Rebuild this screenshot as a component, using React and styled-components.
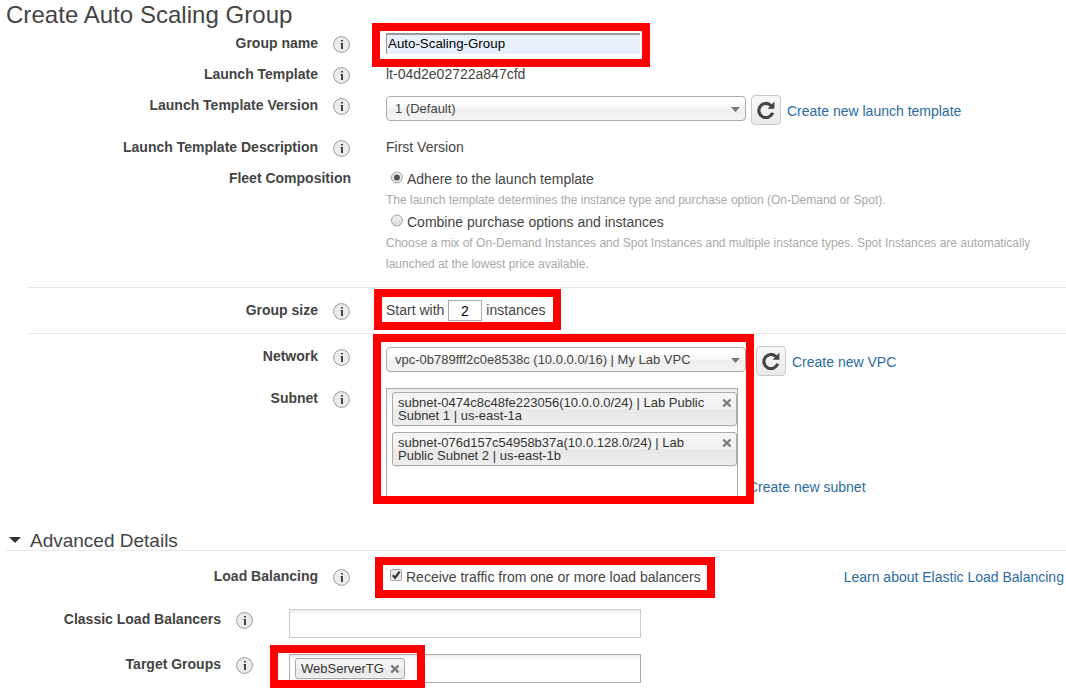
import React from "react";
import styled, { createGlobalStyle } from "styled-components";

const GlobalStyle = createGlobalStyle`
  * { box-sizing: border-box; }
  body {
    margin: 0;
    background: #fff;
    overflow: hidden;
    color: #444;
    font: 14px/20px "Liberation Sans", Arial, sans-serif;
  }
`;

const Page = styled.main`
  position: relative;
  width: 1066px;
  height: 690px;
  overflow: hidden;
`;

const Title = styled.h1`
  margin: 0;
  height: 33px;
  padding-left: 6px;
  font-size: 24px;
  font-weight: normal;
  line-height: 29px;
  letter-spacing: 0.04px;
`;

const Row = styled.div`
  display: flex;
  align-items: flex-start;
  height: ${(p) => p.$h}px;
  padding-top: ${(p) => p.$pad || 0}px;
`;

const Label = styled.div`
  flex: none;
  width: ${(p) => p.$w || 318}px;
  text-align: right;
  font-weight: bold;
`;

const InfoSlot = styled.div`
  flex: none;
  width: ${(p) => p.$w || 68}px;
  padding: 3px 0 0 15px;
  svg { display: block; }
`;

const Field = styled.div`
  display: flex;
  align-items: flex-start;
`;

const Divider = styled.div`
  height: 1px;
  margin-left: 27px;
  background: #eaeaea;
`;

const NameInput = styled.input`
  width: 254px;
  height: 21px;
  padding: 0 0 2px 1px;
  border: 0 solid #999;
  border-width: 2px 0 0 1px;
  background: #e8f0fe;
  color: #000;
  font: 13.333px/17px "Liberation Sans", Arial, sans-serif;
  outline: none;
`;

const Select = styled.div`
  display: flex;
  align-items: center;
  justify-content: space-between;
  width: 360px;
  height: 25px;
  margin-top: 1px;
  padding: 0 5px 0 8px;
  border: 1px solid #aaa;
  border-radius: 4px;
  background: linear-gradient(#fff 20%, #f6f6f6 50%, #eee 52%, #f4f4f4 100%);
  font-size: 13px;
  line-height: 23px;
  svg { margin-top: 2px; }
`;

const RefreshButton = styled.button`
  display: flex;
  align-items: center;
  justify-content: center;
  width: 30px;
  height: 30px;
  margin: 0 6px 0 ${(p) => p.$gap}px;
  padding: 0;
  border: 1px solid #c9c9c9;
  border-radius: 4px;
  background: linear-gradient(#f8f8f8, #e9e9e9);
`;

const Link = styled.a`
  color: #2a6ca2;
  margin-top: ${(p) => p.$top || 0}px;
  margin-left: ${(p) => p.$left || 0}px;
  white-space: nowrap;
`;

const Options = styled.div`
  width: 660px;
`;

const Option = styled.label`
  display: flex;
  height: 22px;
  padding: 1px 0 0 4px;
  svg { flex: none; display: block; margin: 2px 4px 0 0; }
`;

const Hint = styled.p`
  margin: 0;
  color: #a9a9a9;
  font-size: 12px;
  line-height: 21px;
`;

const CountInput = styled.input`
  width: 34px;
  height: 21px;
  margin: 0 4px;
  padding: 0 1px 0 0;
  border: 1px solid #aaa;
  color: #000;
  text-align: center;
  font: 14px "Liberation Sans", Arial, sans-serif;
  outline: none;
`;

const TokenBox = styled.div`
  display: flex;
  flex-direction: ${(p) => (p.$column ? "column" : "row")};
  align-items: flex-start;
  gap: 6px;
  width: 352px;
  height: ${(p) => p.$h}px;
  padding: 3px 0 0 5px;
  border: 1px solid ${(p) => p.$border || "#aaa"};
  background: linear-gradient(#eee 1%, #fff 15%);
  background-size: 100% ${(p) => (p.$column ? 110 : 28)}px;
  background-repeat: no-repeat;
`;

const Token = styled.div`
  display: flex;
  justify-content: space-between;
  width: ${(p) => p.$w}px;
  height: ${(p) => p.$h}px;
  padding: ${(p) => p.$pad}px 4px 0 5px;
  border: 1px solid #aaa;
  border-radius: 3px;
  background: linear-gradient(#f4f4f4 20%, #f0f0f0 50%, #e8e8e8 52%, #eee 100%);
  box-shadow: 0 1px 0 rgba(0, 0, 0, 0.05);
  color: #333;
  font-size: 13px;
  line-height: 13px;
  white-space: nowrap;
  svg { flex: none; margin-top: 2px; }
`;

const SectionHeading = styled.h2`
  display: flex;
  align-items: center;
  gap: 9px;
  height: 21px;
  margin: 0 0 0 6px;
  padding-left: 3px;
  border-bottom: 1px solid #eaeaea;
  font-size: 19px;
  font-weight: normal;
  line-height: 20px;
  span { padding-top: 2px; }
`;

const Highlight = styled.div`
  position: absolute;
  left: ${(p) => p.$x}px;
  top: ${(p) => p.$y}px;
  width: ${(p) => p.$w}px;
  height: ${(p) => p.$h}px;
  border: 8px solid #fe0000;
  pointer-events: none;
`;

const Info = ({ w }) => (
  <InfoSlot $w={w}>
    <svg width="17" height="17" viewBox="0 0 17 17">
      <circle cx="8.5" cy="8.5" r="7.9" fill="#ececec" stroke="#999" />
      <path d="M8 4h2v1.6H8zM8 7h2v6H8z" fill="#444" />
      <path d="M7 7h1v1H7z" fill="#999" />
    </svg>
  </InfoSlot>
);

const Arrow = () => (
  <svg width="9" height="5" viewBox="0 0 9 5">
    <path d="M0 0h9L4.5 5z" fill="#777" />
  </svg>
);

const Refresh = () => (
  <svg width="18" height="18" viewBox="0 0 18 18">
    <path d="M14 4.5A7.1 7.1 0 1 0 15.7 11.8" fill="none" stroke="#444" strokeWidth="3.1" />
    <path d="M17.4 .6V7.8H10.6z" fill="#444" />
  </svg>
);

const Close = () => (
  <svg width="10" height="10" viewBox="0 0 10 10">
    <path d="M1.3 1.5l7.2 7M8.5 1.5L1.3 8.5" stroke="#777" strokeWidth="2.3" />
  </svg>
);

const Radio = ({ on }) => (
  <svg width="13" height="13" viewBox="0 0 13 13">
    <defs>
      <linearGradient id="radioFill" x2="0" y2="1">
        <stop stopColor="#f0f0f0" />
        <stop offset="1" stopColor="#dcdcdc" />
      </linearGradient>
    </defs>
    <circle cx="6.9" cy="6.5" r="5.5" fill="url(#radioFill)" stroke="#a2a2a2" />
    {on && <circle cx="6.9" cy="6.5" r="3" fill="#555" />}
  </svg>
);

const Check = () => (
  <svg width="13" height="13" viewBox="0 0 13 13">
    <rect x="1.5" y=".5" width="11" height="11" rx="1.2" fill="#e8e8e8" stroke="#a4a4a4" />
    <path d="M3.8 6.3l2.3 2.4 4.5-6.1" fill="none" stroke="#333" strokeWidth="2.2" />
  </svg>
);

export default function App() {
  return (
    <Page>
      <GlobalStyle />
      <Title>Create Auto Scaling Group</Title>
      <Row $h={31}>
        <Label>Group name</Label>
        <Info />
        <NameInput defaultValue="Auto-Scaling-Group" spellCheck={false} />
      </Row>
      <Row $h={31}>
        <Label>Launch Template</Label>
        <Info />
        <Field>lt-04d2e02722a847cfd</Field>
      </Row>
      <Row $h={42}>
        <Label>Launch Template Version</Label>
        <Info />
        <Field>
          <Select>1 (Default)<Arrow /></Select>
          <RefreshButton $gap={5}><Refresh /></RefreshButton>
          <Link $top={6}>Create new launch template</Link>
        </Field>
      </Row>
      <Row $h={31}>
        <Label>Launch Template Description</Label>
        <Info />
        <Field>First Version</Field>
      </Row>
      <Row $h={119}>
        <Label $w={351}>Fleet Composition</Label>
        <InfoSlot $w={35} />
        <Options>
          <Option><Radio on />Adhere to the launch template</Option>
          <Hint>The launch template determines the instance type and purchase option (On-Demand or Spot).</Hint>
          <Option><Radio />Combine purchase options and instances</Option>
          <Hint>Choose a mix of On-Demand Instances and Spot Instances and multiple instance types. Spot Instances are automatically launched at the lowest price available.</Hint>
        </Options>
      </Row>
      <Divider />
      <Row $h={45} $pad={12}>
        <Label>Group size</Label>
        <Info />
        <Field>Start with<CountInput defaultValue="2" />instances</Field>
      </Row>
      <Divider />
      <Row $h={54} $pad={12}>
        <Label>Network</Label>
        <Info />
        <Field>
          <Select>vpc-0b789fff2c0e8538c (10.0.0.0/16) | My Lab VPC<Arrow /></Select>
          <RefreshButton $gap={10}><Refresh /></RefreshButton>
          <Link $top={6}>Create new VPC</Link>
        </Field>
      </Row>
      <Row $h={142}>
        <Label>Subnet</Label>
        <Info />
        <Field>
          <TokenBox $column $h={112}>
            <Token $w={345} $h={34} $pad={3}>
              <span>subnet-0474c8c48fe223056(10.0.0.0/24) | Lab Public<br />Subnet 1 | us-east-1a</span>
              <Close />
            </Token>
            <Token $w={345} $h={34} $pad={3}>
              <span>subnet-076d157c54958b37a(10.0.128.0/24) | Lab<br />Public Subnet 2 | us-east-1b</span>
              <Close />
            </Token>
          </TokenBox>
          <Link $top={89} $left={10}>Create new subnet</Link>
        </Field>
      </Row>
      <SectionHeading>
        <svg width="12" height="6" viewBox="0 0 12 6"><path d="M0 0h12L6 6z" fill="#333" /></svg>
        <span>Advanced Details</span>
      </SectionHeading>
      <Row $h={58} $pad={15}>
        <Label>Load Balancing</Label>
        <Info w={67} />
        <Option><Check />Receive traffic from one or more load balancers</Option>
        <Link $top={1} $left={143}>Learn about Elastic Load Balancing</Link>
      </Row>
      <Row $h={45}>
        <Label $w={221}>Classic Load Balancers</Label>
        <Info />
        <TokenBox $h={29} $border="#ccc" />
      </Row>
      <Row $h={36}>
        <Label $w={221}>Target Groups</Label>
        <Info />
        <TokenBox $h={29}>
          <Token $w={110} $h={21} $pad={3}>
            <span>WebServerTG</span>
            <Close />
          </Token>
        </TokenBox>
      </Row>
      <Highlight $x={372} $y={23} $w={278} $h={44} />
      <Highlight $x={374} $y={289} $w={187} $h={41} />
      <Highlight $x={373} $y={334} $w={381} $h={170} />
      <Highlight $x={375} $y={557} $w={340} $h={41} />
      <Highlight $x={270} $y={645} $w={155} $h={43} />
    </Page>
  );
}
